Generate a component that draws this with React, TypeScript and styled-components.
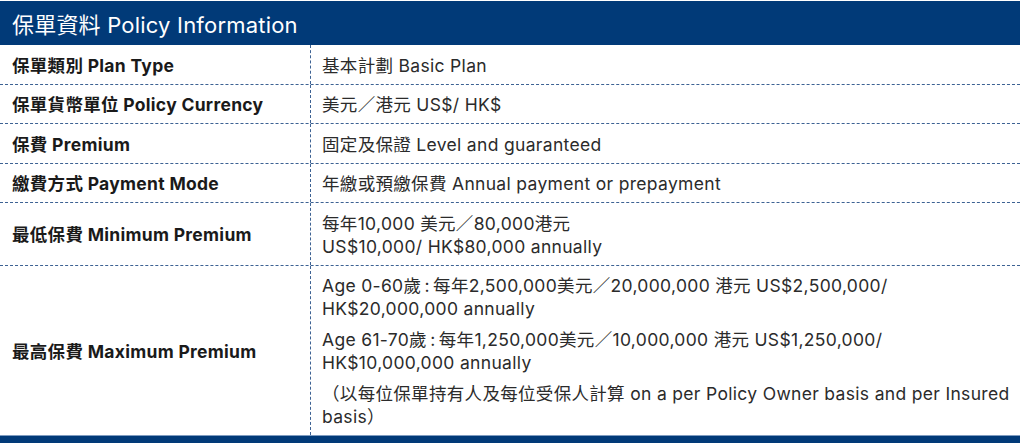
import React from "react";
import styled, { createGlobalStyle } from "styled-components";

const GlobalStyle = createGlobalStyle`
  body {
    margin: 0;
    background: #ffffff;
    font-family: Inter, "Noto Sans CJK TC", sans-serif;
  }
`;

const Table = styled.div`
  width: 1020px;
  padding-top: 1px;
`;

const Header = styled.div`
  background: #013a78;
  color: #ffffff;
  height: 44px;
  display: flex;
  align-items: center;
  padding-left: 12px;
  font-size: 22px;
  font-weight: 400;
  letter-spacing: 0.2px;
`;

const Row = styled.div`
  display: grid;
  grid-template-columns: 311px 1fr;
  border-bottom: 1px dashed #3d6293;
`;

const Label = styled.div`
  border-right: 1px dashed #3d6293;
  display: flex;
  align-items: center;
  padding: 8.5px 12px 7px;
  font-size: 17.5px;
  line-height: 23px;
  font-weight: 700;
  letter-spacing: 0.3px;
  color: #1a1a1a;
  white-space: nowrap;
`;

const Value = styled.div`
  display: flex;
  flex-direction: column;
  justify-content: center;
  gap: 8px;
  padding: 8.5px 0 7px 11px;
  font-size: 17.5px;
  line-height: 23px;
  letter-spacing: 0.32px;
  color: #2b2b2b;
`;

const Para = styled.div``;

const Line = styled.div`
  white-space: nowrap;
`;

const Footer = styled.div`
  height: 7px;
  background: #013a78;
  border-top: 1px solid #7f9cc0;
  margin-top: -1px;
`;

const rows: { label: string; value: string[] }[] = [
  { label: "保單類別 Plan Type", value: ["基本計劃 Basic Plan"] },
  { label: "保單貨幣單位 Policy Currency", value: ["美元／港元 US$/ HK$"] },
  { label: "保費 Premium", value: ["固定及保證 Level and guaranteed"] },
  {
    label: "繳費方式 Payment Mode",
    value: ["年繳或預繳保費 Annual payment or prepayment"],
  },
  {
    label: "最低保費 Minimum Premium",
    value: ["每年10,000 美元／80,000港元\nUS$10,000/ HK$80,000 annually"],
  },
  {
    label: "最高保費 Maximum Premium",
    value: [
      "Age 0-60歲\u2006:\u2006每年2,500,000美元／20,000,000 港元 US$2,500,000/\nHK$20,000,000 annually",
      "Age 61-70歲\u2006:\u2006每年1,250,000美元／10,000,000 港元 US$1,250,000/\nHK$10,000,000 annually",
      "（以每位保單持有人及每位受保人計算 on a per Policy Owner basis and per Insured\nbasis）",
    ],
  },
];

export default function App() {
  return (
    <>
      <GlobalStyle />
      <Table>
        <Header>保單資料 Policy Information</Header>
        {rows.map((r) => (
          <Row key={r.label}>
            <Label>{r.label}</Label>
            <Value>
              {r.value.map((v, i) => (
                <Para key={i}>
                  {v.split("\n").map((line, j) => (
                    <Line key={j}>{line}</Line>
                  ))}
                </Para>
              ))}
            </Value>
          </Row>
        ))}
        <Footer />
      </Table>
    </>
  );
}
